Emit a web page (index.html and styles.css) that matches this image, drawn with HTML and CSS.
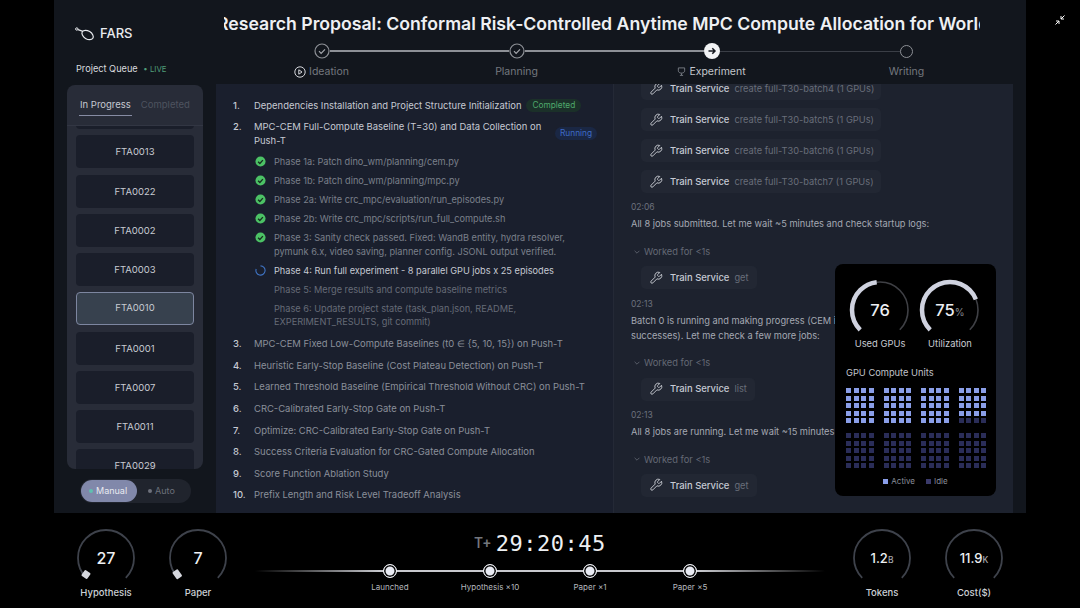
FILE: index.html
```html
<!DOCTYPE html>
<html lang="en">
<head>
  <meta charset="UTF-8">
  <meta name="viewport" content="width=device-width, initial-scale=1.0">
  <title>FARS</title>
  <link rel="stylesheet" href="styles.css">
</head>
<body>
  <svg class="icon-defs" width="0" height="0">
    <defs>
      <symbol id="wrench" viewBox="0 0 24 24">
        <path d="M14.7 6.3a1 1 0 0 0 0 1.4l1.6 1.6a1 1 0 0 0 1.4 0l3.77-3.77a6 6 0 0 1-7.94 7.94l-6.91 6.91a2.12 2.12 0 0 1-3-3l6.91-6.91a6 6 0 0 1 7.94-7.94l-3.76 3.76z" fill="none" stroke="currentColor" stroke-width="1.6" stroke-linejoin="round"/>
      </symbol>
      <symbol id="ok" viewBox="0 0 12 12">
        <circle cx="6" cy="6" r="5.5" fill="#4cc265"/>
        <path d="M3.4 6.2l1.9 1.9 3.3-3.6" fill="none" stroke="#16301f" stroke-width="1.5"/>
      </symbol>
      <symbol id="chev" viewBox="0 0 10 10">
        <path d="M2 3.5l3 3 3-3" fill="none" stroke="currentColor" stroke-width="1"/>
      </symbol>
      <symbol id="checkring" viewBox="0 0 16 16">
        <circle cx="8" cy="8" r="7" fill="none" stroke="#8d9096" stroke-width="1.2"/>
        <path d="M5 8.2l2.1 2.1 3.9-4" fill="none" stroke="#a5a8ae" stroke-width="1.2"/>
      </symbol>
    </defs>
  </svg>

  <div class="stage">
    <aside class="sidebar">
      <div class="brand">
        <svg class="logo" viewBox="0 0 20 14" width="20" height="14">
          <circle cx="1.8" cy="2" r="1.2" fill="none" stroke="#e6e8ec" stroke-width="1"/>
          <path d="M3 2.6l5 1.8" fill="none" stroke="#e6e8ec" stroke-width="1.2"/>
          <ellipse cx="12.6" cy="8" rx="6.2" ry="4" transform="rotate(32 12.6 8)" fill="none" stroke="#e6e8ec" stroke-width="1.2"/>
        </svg>
        <span>FARS</span>
      </div>
      <div class="queue-head">Project Queue <span class="live">• LIVE</span></div>
      <div class="queue">
        <div class="tabs">
          <span class="tab on">In Progress</span>
          <span class="tab">Completed</span>
        </div>
        <div class="cards">
          <div class="card stub"></div>
          <div class="card">FTA0013</div>
          <div class="card">FTA0022</div>
          <div class="card">FTA0002</div>
          <div class="card">FTA0003</div>
          <div class="card sel">FTA0010</div>
          <div class="card">FTA0001</div>
          <div class="card">FTA0007</div>
          <div class="card">FTA0011</div>
          <div class="card">FTA0029</div>
        </div>
      </div>
      <div class="mode">
        <span class="mode-btn on"><i></i>Manual</span>
        <span class="mode-btn"><i></i>Auto</span>
      </div>
    </aside>

    <main class="main">
      <h1 class="title"><span>Research Proposal: Conformal Risk-Controlled Anytime MPC Compute Allocation for World Models</span></h1>

      <div class="track">
        <svg class="node"><use href="#checkring"/></svg>
        <b class="link"></b>
        <svg class="node"><use href="#checkring"/></svg>
        <b class="link"></b>
        <svg class="node" viewBox="0 0 16 16">
          <circle cx="8" cy="8" r="8" fill="#f2f3f5"/>
          <path d="M4.5 8h6.5M8.3 5.2L11 8l-2.7 2.8" fill="none" stroke="#15181f" stroke-width="1.5"/>
        </svg>
        <b class="link dim"></b>
        <span class="node-open"></span>
      </div>
      <div class="steps">
        <span class="step">
          <svg viewBox="0 0 12 12" width="12" height="12">
            <circle cx="6" cy="6" r="5.2" fill="none" stroke="#d5d7dc" stroke-width="1"/>
            <path d="M4.8 3.8L8 6 4.8 8.2z" fill="none" stroke="#d5d7dc" stroke-width="1"/>
          </svg>Ideation</span>
        <span class="step">Planning</span>
        <span class="step cur">
          <svg viewBox="0 0 10 10" width="9" height="9">
            <path d="M1.5 1h7v3.2c0 1.6-1.6 2.6-3.5 2.6S1.500 5.800 1.500 4.200zM5 7v2M3.200 9.300h3.600" fill="none" stroke="#7d8189" stroke-width="1"/>
          </svg>Experiment</span>
        <span class="step">Writing</span>
      </div>

      <section class="panel">
        <div class="plan">
          <div class="task lit"><em>1.</em><span>Dependencies Installation and Project Structure Initialization</span><small class="badge done">Completed</small></div>
          <div class="task lit split"><em>2.</em><span class="wrap">MPC-CEM Full-Compute Baseline (T=30) and Data Collection on Push-T</span><small class="badge run">Running</small></div>
          <ul class="phases">
            <li><svg><use href="#ok"/></svg>Phase 1a: Patch dino_wm/planning/cem.py</li>
            <li><svg><use href="#ok"/></svg>Phase 1b: Patch dino_wm/planning/mpc.py</li>
            <li><svg><use href="#ok"/></svg>Phase 2a: Write crc_mpc/evaluation/run_episodes.py</li>
            <li><svg><use href="#ok"/></svg>Phase 2b: Write crc_mpc/scripts/run_full_compute.sh</li>
            <li><svg><use href="#ok"/></svg><span>Phase 3: Sanity check passed. Fixed: WandB entity, hydra resolver, pymunk 6.x, video saving, planner config. JSONL output verified.</span></li>
            <li class="now">
              <svg viewBox="0 0 12 12"><path d="M6 1a5 5 0 1 1-4.700 3.300" fill="none" stroke="#3f74c4" stroke-width="1.200"/></svg>Phase 4: Run full experiment - 8 parallel GPU jobs x 25 episodes</li>
            <li class="todo"><span>Phase 5: Merge results and compute baseline metrics</span></li>
            <li class="todo"><span>Phase 6: Update project state (task_plan.json, README, EXPERIMENT_RESULTS, git commit)</span></li>
          </ul>
          <div class="task"><em>3.</em><span>MPC-CEM Fixed Low-Compute Baselines (t0 ∈ {5, 10, 15}) on Push-T</span></div>
          <div class="task"><em>4.</em><span>Heuristic Early-Stop Baseline (Cost Plateau Detection) on Push-T</span></div>
          <div class="task"><em>5.</em><span>Learned Threshold Baseline (Empirical Threshold Without CRC) on Push-T</span></div>
          <div class="task"><em>6.</em><span>CRC-Calibrated Early-Stop Gate on Push-T</span></div>
          <div class="task"><em>7.</em><span>Optimize: CRC-Calibrated Early-Stop Gate on Push-T</span></div>
          <div class="task"><em>8.</em><span>Success Criteria Evaluation for CRC-Gated Compute Allocation</span></div>
          <div class="task"><em>9.</em><span>Score Function Ablation Study</span></div>
          <div class="task"><em>10.</em><span>Prefix Length and Risk Level Tradeoff Analysis</span></div>
        </div>

        <div class="log">
          <div class="tool first"><svg><use href="#wrench"/></svg><b>Train Service</b><span>create full-T30-batch4 (1 GPUs)</span></div>
          <div class="tool"><svg><use href="#wrench"/></svg><b>Train Service</b><span>create full-T30-batch5 (1 GPUs)</span></div>
          <div class="tool"><svg><use href="#wrench"/></svg><b>Train Service</b><span>create full-T30-batch6 (1 GPUs)</span></div>
          <div class="tool"><svg><use href="#wrench"/></svg><b>Train Service</b><span>create full-T30-batch7 (1 GPUs)</span></div>
          <time>02:06</time>
          <p>All 8 jobs submitted. Let me wait ~5 minutes and check startup logs:</p>
          <div class="worked"><svg><use href="#chev"/></svg>Worked for &lt;1s</div>
          <div class="tool short"><svg><use href="#wrench"/></svg><b>Train Service</b><span>get</span></div>
          <time>02:13</time>
          <p>Batch 0 is running and making progress (CEM iterations with early successes). Let me check a few more jobs:</p>
          <div class="worked"><svg><use href="#chev"/></svg>Worked for &lt;1s</div>
          <div class="tool short"><svg><use href="#wrench"/></svg><b>Train Service</b><span>list</span></div>
          <time>02:13</time>
          <p>All 8 jobs are running. Let me wait ~15 minutes and check again:</p>
          <div class="worked"><svg><use href="#chev"/></svg>Worked for &lt;1s</div>
          <div class="tool short"><svg><use href="#wrench"/></svg><b>Train Service</b><span>get</span></div>
        </div>

        <div class="gpu">
          <div class="gpu-rings">
            <div class="ring-box">
              <div class="ring">
                <svg viewBox="0 0 64 64">
                  <path class="arc-bg" pathLength="100" d="M12.200 51.800a28 28 0 1 1 39.600 0"/>
                  <path class="arc-val" pathLength="100" stroke-dasharray="47.500 100" d="M12.200 51.800a28 28 0 1 1 39.600 0"/>
                </svg>
                <span class="ring-num">76</span>
              </div>
              <label>Used GPUs</label>
            </div>
            <div class="ring-box">
              <div class="ring">
                <svg viewBox="0 0 64 64">
                  <path class="arc-bg" pathLength="100" d="M12.200 51.800a28 28 0 1 1 39.600 0"/>
                  <path class="arc-val" pathLength="100" stroke-dasharray="75 100" d="M12.200 51.800a28 28 0 1 1 39.600 0"/>
                </svg>
                <span class="ring-num">75<small>%</small></span>
              </div>
              <label>Utilization</label>
            </div>
          </div>
          <h2>GPU Compute Units</h2>
          <div class="units" id="units"></div>
          <div class="legend"><span><i class="act"></i>Active</span><span><i></i>Idle</span></div>
        </div>
      </section>
    </main>
  </div>

  <svg class="shrink" viewBox="0 0 24 24" width="12" height="12">
    <path d="M4 14h6v6M20 10h-6V4M14 10l7-7M3 21l7-7" fill="none" stroke="#fff" stroke-width="2"/>
  </svg>

  <footer class="bottom">
    <div class="gauges">
      <div class="gauge">
        <div class="dial">
          <svg viewBox="0 0 60 60"><path class="dial-arc" d="M10.200 49.800a28 28 0 1 1 39.600 0"/><rect class="dial-knob" x="6.500" y="43" width="7" height="7" rx="1" transform="rotate(35 10 46.500)"/></svg>
          <span>27</span>
        </div>
        <label>Hypothesis</label>
      </div>
      <div class="gauge">
        <div class="dial">
          <svg viewBox="0 0 60 60"><path class="dial-arc" d="M10.200 49.800a28 28 0 1 1 39.600 0"/><rect class="dial-knob" x="6" y="42" width="6.500" height="8.500" rx="1" transform="rotate(-35 9.250 46.250)"/></svg>
          <span>7</span>
        </div>
        <label>Paper</label>
      </div>
    </div>

    <div class="clock">
      <div class="timer"><small>T+</small>29:20:45</div>
      <div class="miles">
        <div class="mile"><i></i><span>Launched</span></div>
        <div class="mile"><i></i><span>Hypothesis ×10</span></div>
        <div class="mile"><i></i><span>Paper ×1</span></div>
        <div class="mile"><i></i><span>Paper ×5</span></div>
      </div>
    </div>

    <div class="gauges">
      <div class="gauge">
        <div class="dial">
          <svg viewBox="0 0 60 60"><path class="dial-arc" d="M10.200 49.800a28 28 0 1 1 39.600 0"/></svg>
          <span class="sm">1.2<small>B</small></span>
        </div>
        <label>Tokens</label>
      </div>
      <div class="gauge">
        <div class="dial">
          <svg viewBox="0 0 60 60"><path class="dial-arc" d="M10.200 49.800a28 28 0 1 1 39.600 0"/></svg>
          <span class="sm">11.9<small>K</small></span>
        </div>
        <label>Cost($)</label>
      </div>
    </div>
  </footer>

  <script src="script.js"></script>
</body>
</html>
```

FILE: styles.css
```css
* {
  box-sizing: border-box;
}
html, body {
  margin: 0;
  height: 608px;
  overflow: hidden;
}
body {
  position: relative;
  background: #000;
  color: #d4d7dd;
  font-family: Inter, "Noto Sans", sans-serif;
  font-size: 9.45px;
  line-height: 13.5px;
}
svg {
  display: block;
}
.icon-defs {
  position: absolute;
}
.shrink {
  position: absolute;
  left: 1054px;
  top: 14px;
}

.stage {
  display: flex;
  width: 972px;
  height: 513px;
  margin-left: 54px;
  background: #12161d;
}

/* sidebar */
.sidebar {
  flex: none;
  width: 162px;
  padding: 0 13px;
}
.brand {
  display: flex;
  align-items: center;
  gap: 5px;
  height: 20px;
  margin: 24px 0 0 8px;
  color: #e9ebef;
  font-size: 13px;
  font-weight: 500;
}
.queue-head {
  margin: 18px 0 8.5px 9px;
  color: #d8dade;
  font-size: 9.2px;
}
.live {
  margin-left: 3px;
  color: #4f9d78;
  font-size: 7.8px;
}
.queue {
  height: 384px;
  overflow: hidden;
  border-radius: 8px;
  background: #282c38;
}
.tabs {
  display: flex;
  gap: 9px;
  height: 41px;
  padding: 13px 0 0 13px;
  border-bottom: 1px solid #323643;
}
.tab {
  height: 17.5px;
  color: #4e535f;
  font-size: 9.5px;
}
.tab.on {
  margin-left: -1px;
  padding: 0 1px;
  color: #c5c8d0;
  border-bottom: 1.500px solid #878ca4;
}
.cards {
  display: flex;
  flex-direction: column;
  gap: 6.25px;
  height: 343px;
  padding: 0 9px;
  overflow: hidden;
}
.card {
  flex: none;
  height: 33px;
  border-radius: 4px;
  background: #1a1e2a;
  color: #c8cbd2;
  font-size: 9.500px;
  line-height: 33px;
  text-align: center;
}
.card.stub {
  margin-top: -30px;
}
.card.sel {
  border: 1.500px solid #7d86a0;
  background: #37414e;
  line-height: 30px;
}
.mode {
  display: flex;
  gap: 2px;
  width: 111px;
  height: 24px;
  margin: 10px 0 0 13px;
  padding: 1px;
  border-radius: 12px;
  background: #20242d;
}
.mode-btn {
  display: flex;
  align-items: center;
  gap: 3px;
  padding: 0 9px;
  border-radius: 11px;
  color: #6d717b;
  font-size: 9px;
}
.mode-btn.on {
  width: 56px;
  padding: 0 0 0 8px;
  background: #8188aa;
  color: #e8eaf0;
}
.mode-btn i {
  width: 4px;
  height: 4px;
  border-radius: 50%;
  background: #6d717b;
}
.mode-btn.on i {
  background: #5fc0b0;
}

/* header */
.main {
  flex: 1;
  min-width: 0;
  padding-right: 13px;
}
.title {
  width: 756px;
  height: 24px;
  margin: 12px 0 0 8px;
  overflow: hidden;
  color: #eef0f3;
  font-size: 17.65px;
  font-weight: 600;
  line-height: 24px;
  white-space: nowrap;
}
.title span {
  display: block;
  margin-left: -7px;
}
.track {
  display: flex;
  align-items: center;
  height: 16px;
  margin: 7px 0 0 98px;
  width: 600px;
}
.node {
  flex: none;
  width: 16px;
  height: 16px;
}
.node-open {
  flex: none;
  width: 13px;
  height: 13px;
  border: 1.200px solid #8d9096;
  border-radius: 50%;
}
.link {
  width: 179px;
  height: 1.500px;
  background: #8d9096;
}
.link.dim {
  width: 180px;
  height: 1px;
  background: #3a3e46;
}
.steps {
  display: grid;
  grid-template-columns: repeat(4, 195px);
  margin: 6px 0 0 8px;
}
.step {
  display: flex;
  align-items: center;
  justify-content: center;
  gap: 3px;
  height: 13px;
  color: #74787f;
  font-size: 10.500px;
}
.step.cur {
  color: #c3c6cc;
}

/* main panel */
.panel {
  position: relative;
  display: flex;
  height: 429px;
  margin-top: 6px;
  overflow: hidden;
  background: #1d222e;
}
.plan {
  flex: none;
  width: 398px;
  padding: 14.5px 0 0 17px;
  border-right: 1px solid #242936;
  background: #1a1f2d;
}
.task {
  display: flex;
  align-items: flex-start;
  margin-bottom: 8.1px;
  color: #8a8f9a;
}
.task.lit {
  color: #c6cad3;
}
.task em {
  flex: none;
  width: 21px;
  color: #c6cad3;
  font-style: normal;
  font-weight: 500;
}
.wrap {
  width: 290px;
}
.split {
  align-items: center;
}
.split em {
  align-self: flex-start;
}
.badge {
  flex: none;
  margin-left: 5px;
  padding: 0 6px;
  border-radius: 8px;
  font-size: 8.300px;
  line-height: 13px;
}
.split .badge {
  margin-left: 11px;
  padding: 0 5px;
}
.done {
  background: #1b3029;
  color: #4fa96c;
}
.run {
  background: #1a2744;
  color: #3f6cc6;
}
.phases {
  margin: 0.5px 0 8.5px;
  padding: 0 0 0 21px;
  list-style: none;
  color: #7b808b;
  font-size: 9.2px;
}
.phases li {
  display: flex;
  align-items: flex-start;
  margin-bottom: 5.500px;
}
.phases svg {
  flex: none;
  width: 11px;
  height: 11px;
  margin: 1px 8px 0 1px;
}
.phases .now {
  color: #c6cad3;
}
.phases .todo {
  padding-left: 20px;
  color: #666b77;
}
.phases li > span {
  width: 305px;
}

/* activity log */
.log {
  flex: 1;
  min-width: 0;
  margin-top: -7px;
  padding-left: 17px;
  color: #a5a9b3;
  font-size: 9.25px;
}
.tool {
  display: flex;
  align-items: center;
  width: 240px;
  height: 23px;
  margin: 0 0 8px 10px;
  padding-left: 8px;
  border-radius: 5px;
  background: #222733;
  color: #696e7a;
  white-space: nowrap;
}
.tool svg {
  flex: none;
  width: 14px;
  height: 14px;
  margin-right: 7px;
  color: #c8cbd2;
}
.tool b {
  margin-right: 5px;
  color: #c6cad3;
  font-size: 9.45px;
  font-weight: 500;
}
.tool.short {
  width: fit-content;
  padding-right: 8px;
  margin-bottom: 0;
}
.log time {
  display: block;
  margin-top: 8.25px;
  color: #6b707c;
  font-size: 8.500px;
}
.log p {
  width: 340px;
  margin: 1.5px 0 0;
  line-height: 15px;
}
.worked {
  display: flex;
  align-items: center;
  gap: 3px;
  height: 14px;
  margin: 13.5px 0 7.5px 2px;
  color: #646975;
  font-size: 9.300px;
}
.worked svg {
  width: 8px;
  height: 8px;
}

/* gpu popup */
.gpu {
  position: absolute;
  left: 619px;
  top: 180px;
  width: 161px;
  height: 232px;
  padding: 14px 11px;
  border-radius: 8px;
  background: #000;
}
.gpu-rings {
  display: flex;
  gap: 6px;
  padding-left: 2px;
}
.ring-box {
  width: 64px;
  text-align: center;
}
.ring-box label {
  display: block;
  color: #c8cbd2;
  font-size: 9.4px;
}
.ring {
  position: relative;
  width: 64px;
  height: 59px;
}
.ring svg {
  width: 64px;
  height: 64px;
}
.arc-bg {
  fill: none;
  stroke: #3f4045;
  stroke-width: 1.600;
}
.arc-val {
  fill: none;
  stroke: #cfd2df;
  stroke-width: 4.500;
}
.ring-num {
  position: absolute;
  left: 0;
  right: 0;
  top: 20px;
  color: #eceef2;
  font-size: 16.5px;
  font-weight: 500;
  line-height: 24px;
}
.ring-num small {
  color: #8a8d94;
  font-size: 10px;
  font-weight: 400;
}
.gpu h2 {
  margin: 15.75px 0 9px;
  color: #c0c3ca;
  font-size: 9.3px;
  font-weight: 400;
  line-height: 13px;
}
.units {
  display: grid;
  grid-template-columns: repeat(4, 27.500px);
  gap: 10px;
}
.group {
  display: grid;
  grid-template-columns: repeat(4, 5px);
  gap: 2.500px;
}
.cell {
  height: 5px;
  background: #2a2d58;
}
.cell.act {
  background: #8a9ee8;
}
.legend {
  display: flex;
  justify-content: center;
  gap: 11px;
  margin-top: 8px;
  color: #8a8e9a;
  font-size: 8px;
  line-height: 11px;
}
.legend span {
  display: flex;
  align-items: center;
  gap: 3px;
}
.legend i {
  width: 5px;
  height: 5px;
  background: #3a3a6a;
}
.legend i.act {
  background: #8a9ee8;
}

/* bottom bar */
.bottom {
  display: grid;
  grid-template-columns: 184px 1fr 184px;
  height: 95px;
  padding: 0 60px;
}
.gauges {
  display: flex;
  padding-top: 15px;
}
.gauge {
  width: 92px;
  text-align: center;
}
.gauge label {
  display: block;
  margin-top: -2px;
  color: #ccd0d6;
  font-size: 9.500px;
  font-weight: 500;
}
.dial {
  position: relative;
  width: 60px;
  height: 60px;
  margin: 0 auto;
}
.dial svg {
  width: 60px;
  height: 60px;
}
.dial-arc {
  fill: none;
  stroke: #3e424b;
  stroke-width: 1.800;
}
.dial-knob {
  fill: #d5d7de;
}
.dial span {
  position: absolute;
  left: 0;
  right: 0;
  top: 18px;
  color: #eef0f3;
  font-size: 16px;
  font-weight: 500;
  line-height: 24px;
}
.dial span.sm {
  font-size: 13px;
}
.dial small {
  color: #a5a8ae;
  font-size: 8.500px;
}
.clock {
  display: flex;
  flex-direction: column;
  align-items: center;
  padding-top: 18px;
}
.timer {
  display: flex;
  align-items: center;
  gap: 5px;
  height: 26px;
  color: #eef0f3;
  font-family: "DejaVu Sans Mono", monospace;
  font-size: 22px;
  font-weight: 500;
  letter-spacing: 0.5px;
}
.timer small {
  color: #73767c;
  font-family: "Roboto", sans-serif;
  font-size: 14px;
  font-weight: 500;
  letter-spacing: 0;
}
.miles {
  position: relative;
  display: flex;
  justify-content: center;
  width: 570px;
  margin-top: 7px;
}
.miles::before {
  content: "";
  position: absolute;
  left: 0;
  right: 0;
  top: 6px;
  height: 1.500px;
  background: linear-gradient(90deg, transparent, #c8c9ce 22%, #c8c9ce 78%, transparent);
}
.mile {
  position: relative;
  width: 100px;
  text-align: center;
}
.mile i {
  display: block;
  width: 14px;
  height: 14px;
  margin: 0 auto 2px;
  border: 1.500px solid #f0f1f5;
  border-radius: 50%;
  background: #e9ebf3;
  box-shadow: inset 0 0 0 1.500px #000;
}
.mile span {
  color: #b4b7bd;
  font-size: 8px;
}
```

FILE: script.js
```js
// 8 blocks of 20 cells, 76 of them active
const units = document.getElementById("units");
let active = 76;
for (let g = 0; g < 8; g++) {
  const group = document.createElement("div");
  group.className = "group";
  for (let c = 0; c < 20; c++) {
    const cell = document.createElement("div");
    cell.className = active > 0 ? "cell act" : "cell";
    active--;
    group.appendChild(cell);
  }
  units.appendChild(group);
}
```
